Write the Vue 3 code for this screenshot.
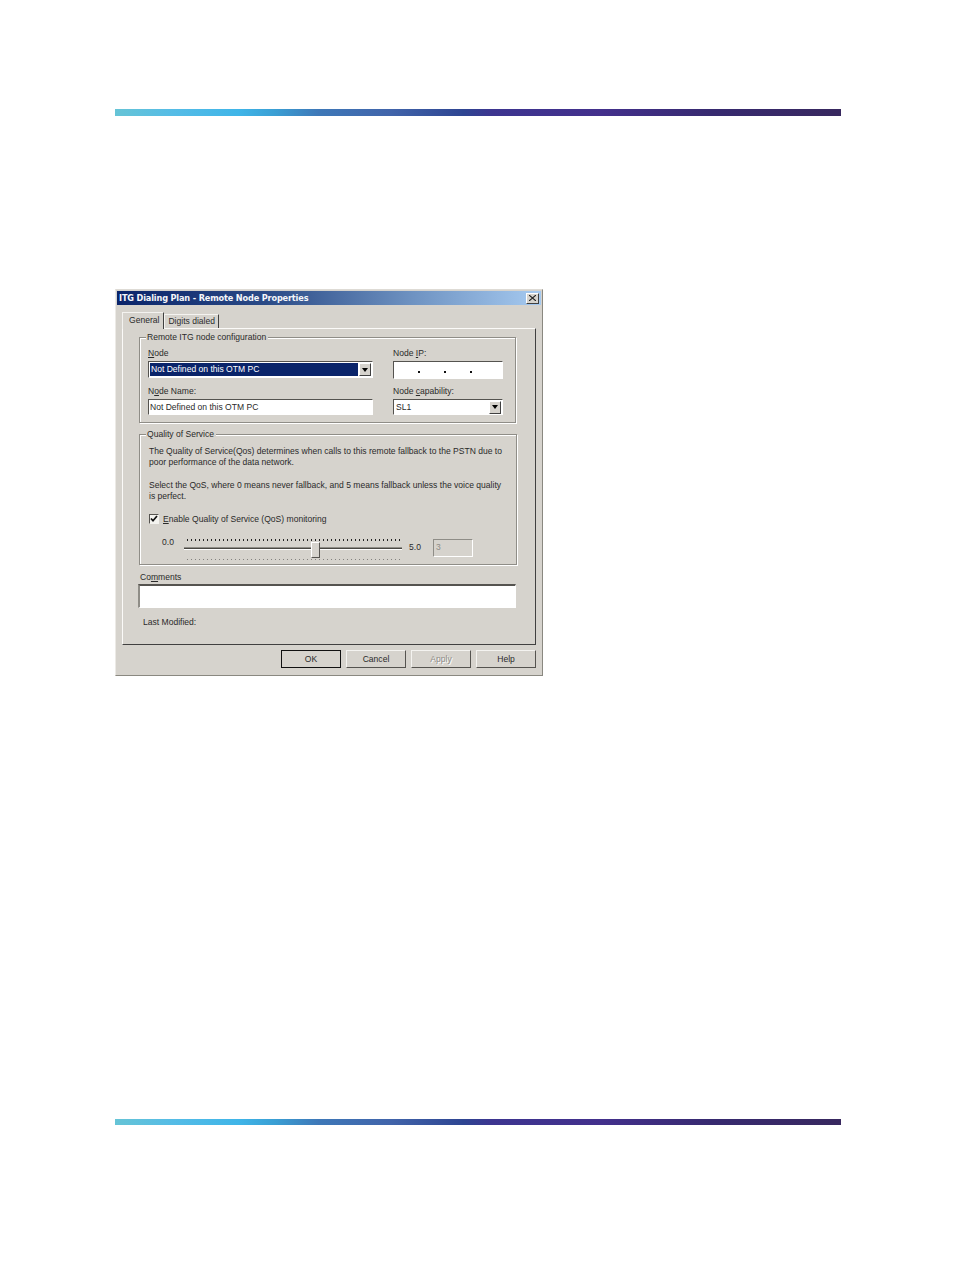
<script setup>
const marks = Array.from({ length: 54 }, (_, i) => i)
</script>

<template>
  <div class="page">
    <div class="bar"></div>
    <div class="dialog">
      <div class="title">
        <span>ITG Dialing Plan - Remote Node Properties</span>
        <span class="close">
          <svg width="7" height="6" viewBox="0 0 7 6"><path d="M0 0l7 6M7 0L0 6" fill="none" stroke="#222" stroke-width="1.1"/></svg>
        </span>
      </div>
      <div class="tabs">
        <div class="tab active">General</div>
        <div class="tab">Digits dialed</div>
      </div>
      <div class="panel">
        <div class="group first">
          <span class="legend">Remote ITG node configuration</span>
          <div class="grid">
            <div class="field">
              <label><u>N</u>ode</label>
              <div class="combo selected">
                <span class="val">Not Defined on this OTM PC</span>
                <span class="arrow"><i></i></span>
              </div>
            </div>
            <div class="field">
              <label>Node <u>I</u>P:</label>
              <div class="input ip"><b></b><b></b><b></b></div>
            </div>
            <div class="field">
              <label>N<u>o</u>de Name:</label>
              <div class="input short"><span class="val">Not Defined on this OTM PC</span></div>
            </div>
            <div class="field">
              <label>Node <u>c</u>apability:</label>
              <div class="combo short">
                <span class="val">SL1</span>
                <span class="arrow"><i></i></span>
              </div>
            </div>
          </div>
        </div>

        <div class="group second">
          <span class="legend">Quality of Service</span>
          <p>The Quality of Service(Qos) determines when calls to this remote fallback to the PSTN due to<br>poor performance of the data network.</p>
          <p class="gap">Select the QoS, where 0 means never fallback, and 5 means fallback unless the voice quality<br>is perfect.</p>
          <div class="check">
            <span class="box">
              <svg width="8" height="8" viewBox="0 0 8 8"><path d="M1 3.5l2 2.3L7 1" fill="none" stroke="#111" stroke-width="1.7"/></svg>
            </span>
            <span><u>E</u>nable Quality of Service (QoS) monitoring</span>
          </div>
          <div class="slider-row">
            <span class="lo">0.0</span>
            <div class="slider">
              <div class="ticks top"><i v-for="m in marks" :key="m"></i></div>
              <div class="track"></div>
              <div class="thumb"></div>
              <div class="ticks bottom"><i v-for="m in marks" :key="m"></i></div>
            </div>
            <span class="hi">5.0</span>
            <div class="readout">3</div>
          </div>
        </div>

        <label class="comments-label">Co<u>m</u>ments</label>
        <div class="comments"></div>
        <div class="modified">Last Modified:</div>
      </div>
      <div class="buttons">
        <div class="btn default">OK</div>
        <div class="btn">Cancel</div>
        <div class="btn disabled">Apply</div>
        <div class="btn">Help</div>
      </div>
    </div>
    <div class="bar lower"></div>
  </div>
</template>

<style>
html, body { margin: 0; background: #fff; }
</style>

<style scoped>
.page {
  width: 954px;
  height: 1272px;
  padding: 109px 0 0 115px;
  box-sizing: border-box;
  font-family: "Liberation Sans", Arial, sans-serif;
  font-size: 8.56px;
  color: #2a2a2a;
  overflow: hidden;
}
.bar {
  width: 726px;
  height: 7px;
  background: linear-gradient(90deg, #66c4d6 0%, #55bce6 8%, #3fb5e8 17%, #3a9fd4 22%, #3e78b8 28%, #4164aa 38%, #2e4592 48%, #3d3590 52%, #43308c 67%, #372a70 82%, #38285f 100%);
}
.bar.lower { margin-top: 443px; height: 6px; }
.dialog {
  width: 428px;
  height: 387px;
  margin-top: 173px;
  box-sizing: border-box;
  background: #d6d3cd;
  border: 1px solid #8a8880;
  border-top-color: #dedbd5;
  border-left-color: #eceae6;
  padding: 1px 1px 0 1px;
  display: flex;
  flex-direction: column;
}
.title {
  height: 14px;
  flex: none;
  display: flex;
  align-items: center;
  justify-content: space-between;
  padding: 0 2px 0 2px;
  background: linear-gradient(90deg, #0a246a 0%, #2a4a86 35%, #6f93c2 70%, #a6caf0 100%);
  color: #f4f6fa;
  font: bold 8.2px "DejaVu Sans", sans-serif;
  letter-spacing: -0.02em;
}
.close {
  width: 13px;
  height: 11px;
  background: #d6d3cd;
  border: 1px solid;
  border-color: #fff #404040 #404040 #fff;
  box-sizing: border-box;
  display: flex;
  align-items: center;
  justify-content: center;
}
.tabs {
  display: flex;
  align-items: flex-end;
  height: 17px;
  margin: 6px 0 0 5px;
  flex: none;
  position: relative;
  z-index: 1;
}
.tab {
  height: 13px;
  line-height: 13px;
  padding: 0 3px;
  border: 1px solid #f4f3f0;
  border-right-color: #404040;
  border-bottom: 0;
  box-sizing: content-box;
}
.tab.active {
  height: 16px;
  line-height: 14px;
  padding: 0 4px 0 6px;
  background: #d6d3cd;
  margin-bottom: -1px;
}
.panel {
  flex: none;
  height: 317px;
  width: 414px;
  margin-left: 5px;
  box-sizing: border-box;
  border: 1px solid;
  border-color: #fbfaf8 #404040 #404040 #fbfaf8;
  padding: 8px 19px 0 16px;
}
.group {
  position: relative;
  border: 1px solid #8f8d87;
  box-shadow: inset 1px 1px 0 #fff, 1px 1px 0 #fff;
  box-sizing: border-box;
}
.legend {
  position: absolute;
  top: -6px;
  left: 6px;
  padding: 0 2px 0 1px;
  background: #d6d3cd;
  line-height: 11px;
}
.first { height: 86px; padding: 10px 0 0 8px; }
.grid {
  display: grid;
  grid-template-columns: 225px 110px;
  column-gap: 20px;
  grid-template-rows: 38px 34px;
}
.field label { display: block; line-height: 11px; margin-bottom: 2px; }
.input, .combo {
  height: 17px;
  box-sizing: border-box;
  background: #fff;
  border: 1px solid #fff;
  border-top-color: #55534f;
  border-left-color: #55534f;
  display: flex;
  align-items: center;
  position: relative;
}
.short { height: 16px; }
.val { padding-left: 1px; line-height: 13px; }
.combo.selected .val { flex: 1; background: #0a246a; color: #fff; margin: 1px; }
.combo .val { flex: 1; }
.combo.short .val { padding-left: 2px; }
.arrow {
  width: 12px;
  height: 13px;
  margin-right: 1px;
  background: #d6d3cd;
  border: 1px solid;
  border-color: #fff #404040 #404040 #fff;
  box-sizing: border-box;
  display: flex;
  align-items: center;
  justify-content: center;
  flex: none;
}
.arrow i {
  width: 0;
  height: 0;
  border: 3.5px solid transparent;
  border-top: 4px solid #000;
  border-bottom: 0;
}
.ip { height: 18px; justify-content: flex-start; padding: 3px 0 0 24px; gap: 24px; }
.ip b { width: 2px; height: 2px; background: #111; }
.second {
  height: 131px;
  width: 378px;
  margin-top: 11px;
  padding: 11px 0 0 9px;
}
p { margin: 0; line-height: 11px; white-space: nowrap; }
p.gap { margin-top: 12px; }
.check {
  display: flex;
  align-items: center;
  gap: 4px;
  margin-top: 11px;
  line-height: 12px;
}
.box {
  width: 8px;
  height: 8px;
  border: 1px solid;
  border-color: #55534f #f4f3ef #f4f3ef #55534f;
  background: #f4f3ef;
  display: flex;
}
.slider-row {
  display: flex;
  align-items: flex-start;
  margin-top: 14px;
}
.lo { margin: -2px 0 0 13px; width: 22px; line-height: 11px; }
.slider { width: 218px; height: 24px; position: relative; }
.ticks { display: flex; justify-content: space-between; padding: 0 2px 0 3px; }
.ticks i { width: 1px; height: 1px; background: #222; }
.ticks.top { height: 2px; }
.ticks.top i { height: 2px; }
.ticks.bottom { margin-top: 9px; opacity: .45; }
.track { height: 1px; margin-top: 7px; background: #4a4843; border-bottom: 1px solid #fff; box-shadow: 0 -1px 0 #8f8d87; }
.thumb {
  position: absolute;
  left: 127px;
  top: 3px;
  width: 9px;
  height: 16px;
  box-sizing: border-box;
  background: #d6d3cd;
  border: 1px solid;
  border-color: #fff #55534f #55534f #fff;
}
.hi { margin: 3px 0 0 7px; width: 24px; line-height: 11px; }
.readout {
  width: 40px;
  height: 18px;
  box-sizing: border-box;
  border: 1px solid #fff;
  border-top-color: #8f8d87;
  border-left-color: #8f8d87;
  padding: 1px 0 0 2px;
  color: #8f8d87;
  line-height: 13px;
}
.comments-label { display: block; margin: 7px 0 0 1px; line-height: 11px; }
.comments {
  width: 378px;
  height: 24px;
  margin: 1px 0 0 -1px;
  box-sizing: border-box;
  background: #fff;
  border: 1px solid #fff;
  border-top: 2px solid #55534f;
  border-left: 2px solid #8f8d87;
}
.modified { margin: 9px 0 0 4px; line-height: 11px; }
.buttons {
  display: flex;
  justify-content: flex-end;
  gap: 5px;
  margin-top: 5px;
  padding-right: 5px;
}
.btn {
  width: 60px;
  height: 18px;
  box-sizing: border-box;
  text-align: center;
  line-height: 16px;
  border: 1px solid;
  border-color: #f4f3f0 #55534f #55534f #f4f3f0;
}
.btn.default { border-color: #111; }
.btn.disabled { color: #8f8d87; text-shadow: 1px 1px 0 #fff; }
</style>
